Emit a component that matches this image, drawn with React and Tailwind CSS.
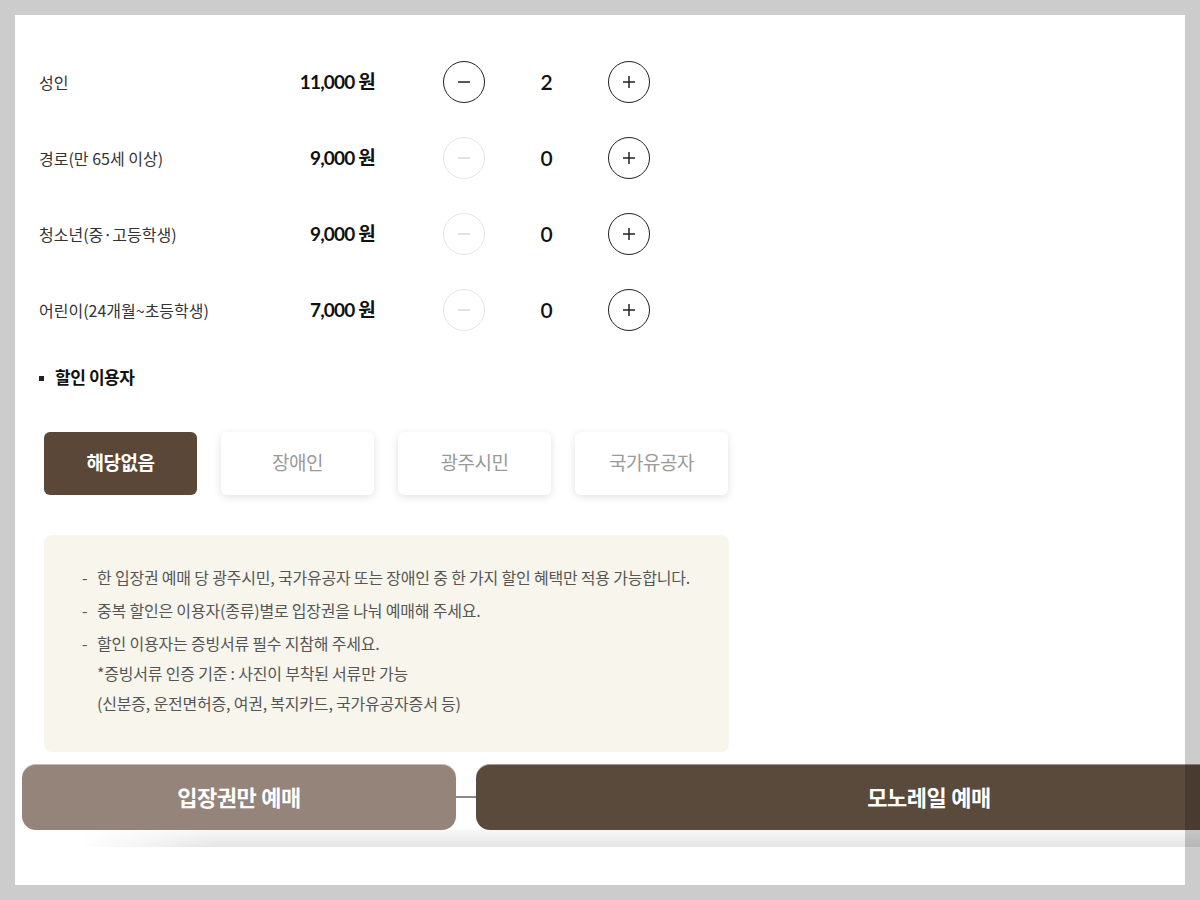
import { useState } from 'react'
import clsx from 'clsx'

const font = { fontFamily: "Lato, 'Noto Sans CJK KR', 'Noto Sans', sans-serif" }
const krFont = { fontFamily: "'Noto Sans CJK KR', 'Noto Sans', sans-serif" }

const tickets = [
  { label: '성인', price: '11,000 원', count: 2 },
  { label: '경로(만 65세 이상)', price: '9,000 원', count: 0 },
  { label: '청소년(중·고등학생)', price: '9,000 원', count: 0 },
  { label: '어린이(24개월~초등학생)', price: '7,000 원', count: 0 },
]

const discounts = ['해당없음', '장애인', '광주시민', '국가유공자']

const CircleButton = ({ type, disabled }) => (
  <button
    className={clsx(
      'w-[42px] h-[42px] rounded-full border flex items-center justify-center bg-white',
      disabled ? 'border-[#e4e4e4] text-[#d8d8d8]' : 'border-[#222] text-[#222]'
    )}
  >
    <svg width="16" height="16" viewBox="0 0 16 16" fill="none" stroke="currentColor" strokeWidth="1.5">
      <path d="M2 8h12" />
      {type === 'plus' && <path d="M8 2v12" />}
    </svg>
  </button>
)

const TicketRow = ({ label, price, count }) => (
  <div className="flex items-center h-[76px] pl-[39px]">
    <div className="w-[220px] text-[16px] text-[#333]" style={krFont}>{label}</div>
    <div className="w-[116px] text-right text-[19px] font-bold text-[#111] tracking-[-0.8px]">{price}</div>
    <div className="ml-[68px] flex items-center">
      <CircleButton type="minus" disabled={count === 0} />
      <div className="w-[123px] text-center text-[21px] font-semibold text-[#111]">{count}</div>
      <CircleButton type="plus" />
    </div>
  </div>
)

const notes = [
  { dash: true, text: '한 입장권 예매 당 광주시민, 국가유공자 또는 장애인 중 한 가지 할인 혜택만 적용 가능합니다.' },
  { dash: true, text: '중복 할인은 이용자(종류)별로 입장권을 나눠 예매해 주세요.' },
  { dash: true, text: '할인 이용자는 증빙서류 필수 지참해 주세요.' },
  { dash: false, text: '*증빙서류 인증 기준 : 사진이 부착된 서류만 가능' },
  { dash: false, text: '(신분증, 운전면허증, 여권, 복지카드, 국가유공자증서 등)' },
]

export default function App() {
  const [selected, setSelected] = useState(0)

  return (
    <div className="relative w-[1200px] h-[900px] bg-white overflow-hidden" style={font}>
      <div className="pt-[44px]">
        {tickets.map(t => (
          <TicketRow key={t.label} {...t} />
        ))}
      </div>

      <div className="mt-[20px] pl-[39px] flex items-center h-[20px]">
        <span className="w-[5px] h-[5px] bg-[#222]" />
        <span className="ml-[11px] text-[17px] font-bold text-[#111] tracking-[-0.5px]">할인 이용자</span>
      </div>

      <div className="mt-[44px] pl-[44px] flex gap-[24px]">
        {discounts.map((d, i) => (
          <button
            key={d}
            onClick={() => setSelected(i)}
            className={clsx(
              'w-[153px] h-[63px] rounded-[6px] text-[19px] tracking-[-0.5px]',
              selected === i
                ? 'bg-[#5a4738] text-white font-bold'
                : 'bg-white text-[#9a9a9a] shadow-[0_2px_8px_rgba(0,0,0,0.12)]'
            )}
          >
            {d}
          </button>
        ))}
      </div>

      <div className="mt-[40px] ml-[44px] w-[685px] h-[217px] rounded-[8px] bg-[#f7f5ec] pt-[27px] pl-[38px]">
        {notes.map((n, i) => (
          <div
            key={i}
            className={clsx(
              'flex text-[16px] text-[#555] tracking-[-0.2px] leading-[30px]',
              i > 0 && i < 3 && 'mt-[3px]'
            )}
            style={krFont}
          >
            <span className="w-[15px]">{n.dash ? '-' : ''}</span>
            <span>{n.text}</span>
          </div>
        ))}
      </div>

      <div className="mt-[12px] ml-[22px] flex items-center">
        <button className="shrink-0 w-[434px] h-[66px] rounded-[14px] bg-[#958479] border-t border-[#c9b9b2] text-white text-[22px] font-bold tracking-[-0.5px]">
          입장권만 예매
        </button>
        <div className="shrink-0 w-[20px] h-[2px] bg-[#8a8a8a]" />
        <button className="shrink-0 w-[906px] h-[66px] rounded-[14px] bg-[#5a4a3c] border-t border-[#a89890] text-white text-[22px] font-bold tracking-[-0.5px]">
          모노레일 예매
        </button>
      </div>
      <div className="ml-[80px] h-[17px] bg-[linear-gradient(to_bottom,#f7f7f7,#e5e5e5)] [mask-image:linear-gradient(to_right,transparent,black_12%)]" />

      <div className="pointer-events-none absolute inset-0 border-[15px] border-black/20" />
    </div>
  )
}
